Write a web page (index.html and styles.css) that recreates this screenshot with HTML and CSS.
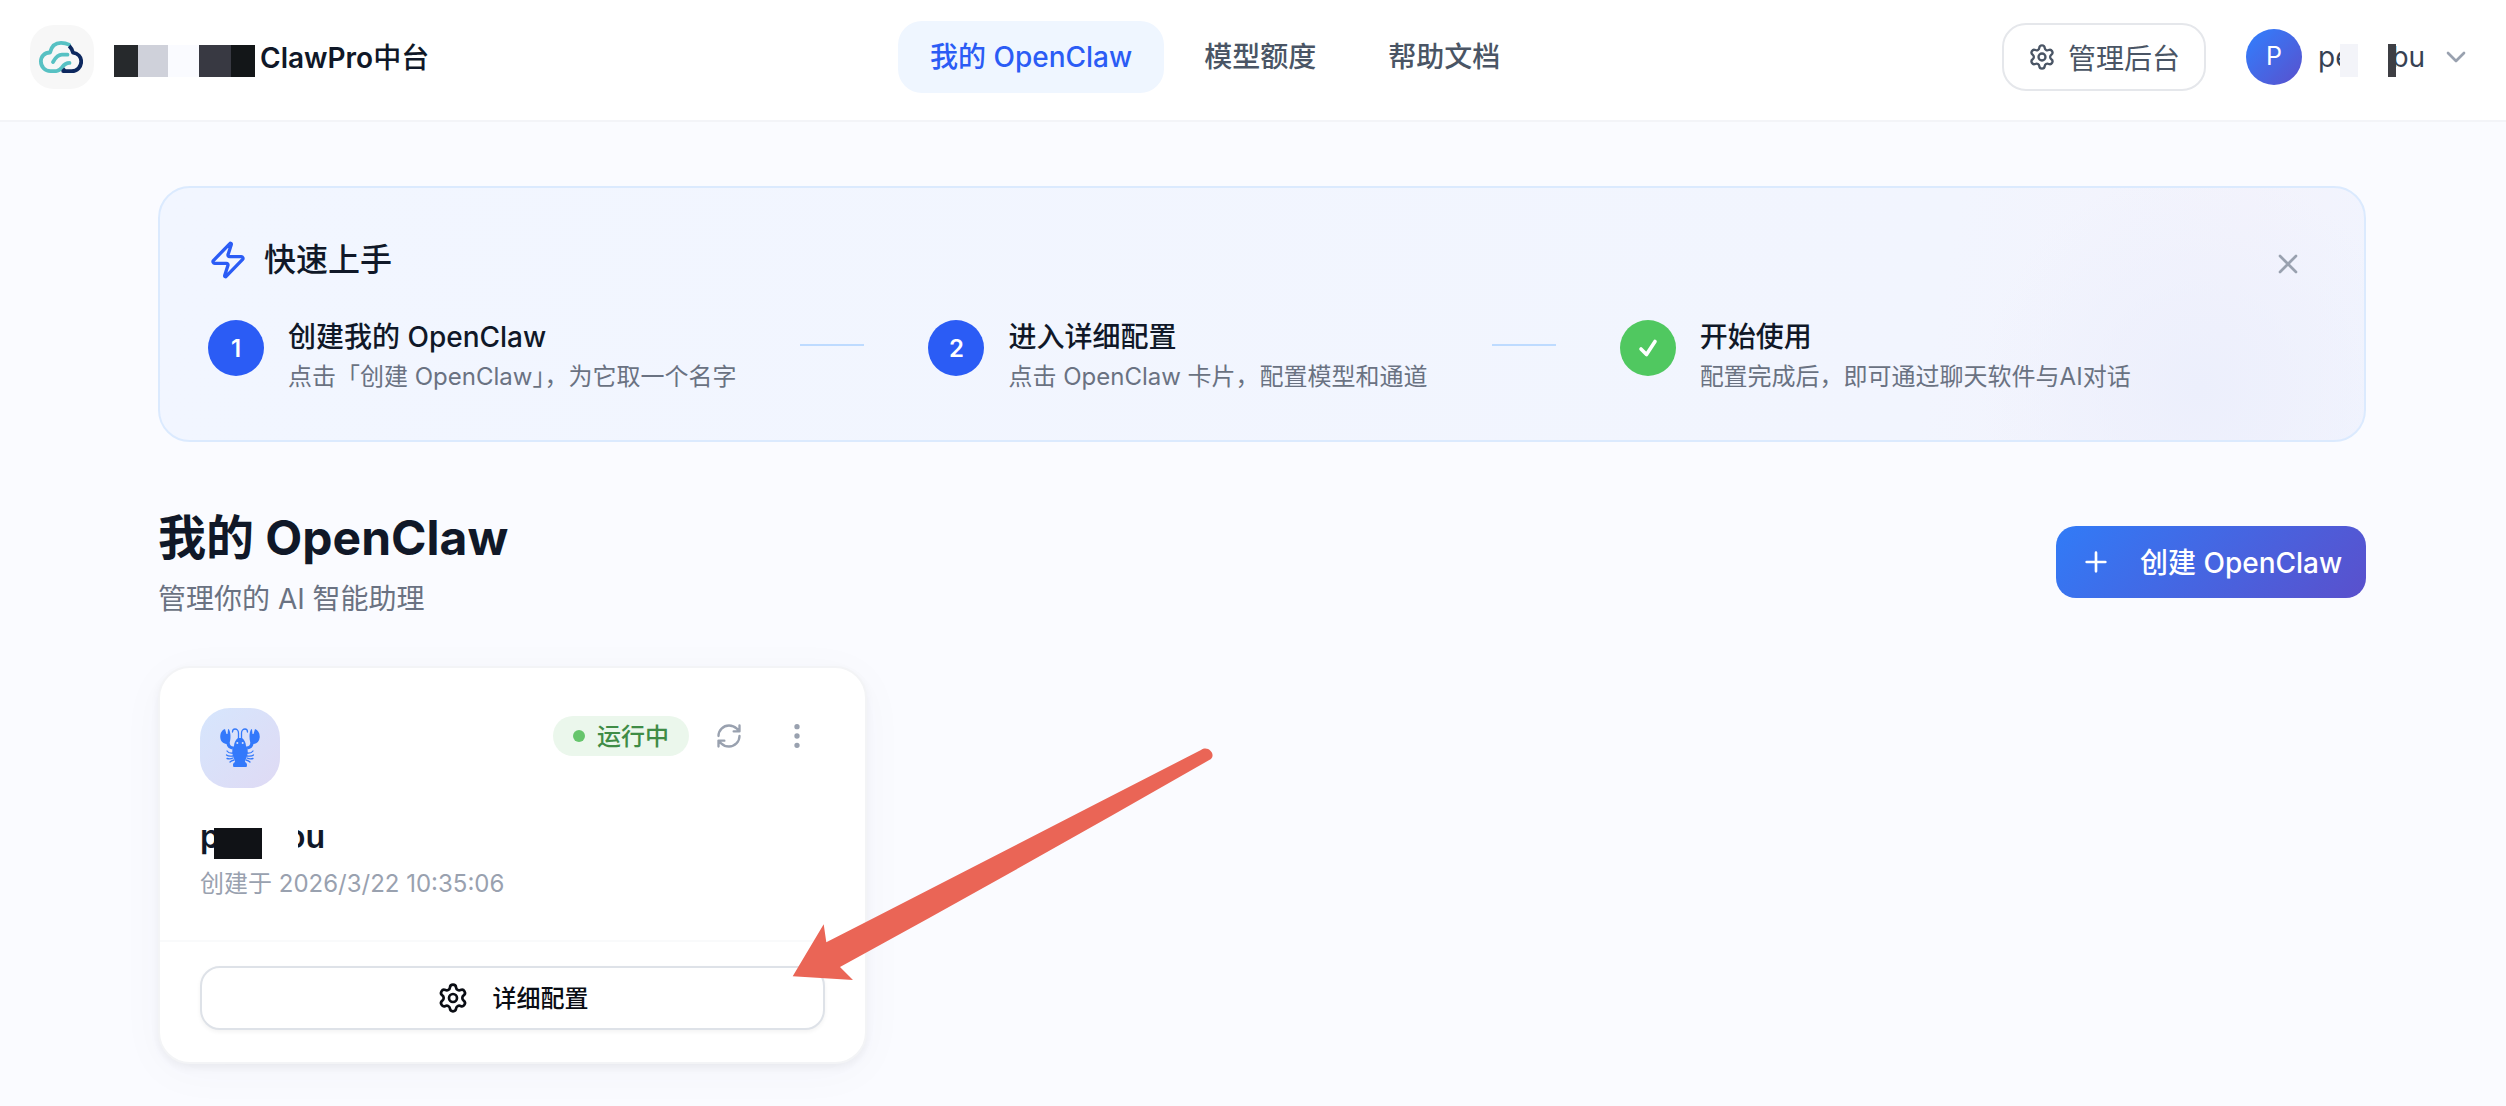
FILE: index.html
```html
<!DOCTYPE html>
<html lang="zh-CN">
<head>
  <meta charset="UTF-8">
  <title>ClawPro中台</title>
  <link rel="stylesheet" href="styles.css">
</head>
<body>
  <svg class="sprite">
    <symbol id="icon-cog" viewBox="0 0 24 24">
      <path d="M9.671 4.136a2.34 2.34 0 0 1 4.659 0 2.34 2.34 0 0 0 3.319 1.915 2.34 2.34 0 0 1 2.33 4.033 2.34 2.34 0 0 0 0 3.831 2.34 2.34 0 0 1-2.33 4.033 2.34 2.34 0 0 0-3.319 1.915 2.34 2.34 0 0 1-4.659 0 2.34 2.34 0 0 0-3.32-1.915 2.34 2.34 0 0 1-2.33-4.033 2.34 2.34 0 0 0 0-3.831A2.34 2.34 0 0 1 6.35 6.051a2.34 2.34 0 0 0 3.319-1.915"/>
      <circle cx="12" cy="12" r="3"/>
    </symbol>
  </svg>

  <header class="header">
    <div class="brand">
      <div class="logo">
        <svg viewBox="0 0 44 32">
          <path class="teal" d="M30 3.600C27.500 2.400 25 1.900 22 1.900c-5.600 0-9.600 3.600-11 9.600C5.500 11.500 1.900 15.500 1.900 20.300c0 5.500 4 9.800 9.500 9.800h5.800c2.600 0 4.300-1.700 6-3.900 2-2.800 3.300-4.300 7.300-4.300"/>
          <path class="teal" d="M14 21c2-3.500 5-7.300 9-7.300h5.500"/>
          <path class="navy" d="M30.200 4.800c2 2 3.300 4.200 3.800 6.800 4.800.8 8.200 4.200 8.200 9 0 5.200-4 9.500-9.500 9.500h-8.500l2.300-2.300"/>
        </svg>
      </div>
      <div class="mosaic">
        <i class="m1"></i><i class="m2"></i><i class="m3"></i><i class="m4"></i><i class="m5"></i>
      </div>
      <span class="brand-name">ClawPro<span class="cn">中台</span></span>
    </div>

    <nav class="nav">
      <a class="nav-link active">我的 OpenClaw</a>
      <a class="nav-link">模型额度</a>
      <a class="nav-link">帮助文档</a>
    </nav>

    <div class="user-area">
      <button class="admin-btn">
        <svg class="icon"><use href="#icon-cog"/></svg>
        管理后台
      </button>
      <div class="user">
        <div class="avatar">P</div>
        <div class="user-name"><span>pe</span><i class="mask"></i><span>bu</span></div>
        <svg class="icon chevron" viewBox="0 0 24 24"><path d="m6 9 6 6 6-6"/></svg>
      </div>
    </div>
  </header>

  <main class="main">
    <section class="guide">
      <div class="guide-head">
        <svg class="icon zap" viewBox="0 0 24 24"><path d="M4 14a1 1 0 0 1-.78-1.630l9.900-10.200a.5.5 0 0 1 .86.460l-1.920 6.020A1 1 0 0 0 13 10h7a1 1 0 0 1 .78 1.630l-9.900 10.200a.5.5 0 0 1-.86-.460l1.920-6.020A1 1 0 0 0 11 14z"/></svg>
        <h2>快速上手</h2>
        <svg class="icon close" viewBox="0 0 24 24"><path d="M18 6 6 18M6 6l12 12"/></svg>
      </div>
      <div class="steps">
        <div class="step">
          <div class="step-num">1</div>
          <div>
            <h3>创建我的 OpenClaw</h3>
            <p>点击「创建 OpenClaw」，为它取一个名字</p>
          </div>
        </div>
        <div class="step-line"></div>
        <div class="step">
          <div class="step-num">2</div>
          <div>
            <h3>进入详细配置</h3>
            <p>点击 OpenClaw 卡片，配置模型和通道</p>
          </div>
        </div>
        <div class="step-line"></div>
        <div class="step">
          <div class="step-num done">
            <svg class="icon" viewBox="0 0 24 24"><path d="M19 5.500 10.500 18.500 5 13"/></svg>
          </div>
          <div>
            <h3>开始使用</h3>
            <p>配置完成后，即可通过聊天软件与AI对话</p>
          </div>
        </div>
      </div>
    </section>

    <section class="page-head">
      <div>
        <h1>我的 OpenClaw</h1>
        <p>管理你的 AI 智能助理</p>
      </div>
      <button class="create-btn">
        <svg class="icon" viewBox="0 0 24 24"><path d="M5 12h14M12 5v14"/></svg>
        <span>创建 OpenClaw</span>
      </button>
    </section>

    <article class="card">
      <div class="card-body">
        <div class="card-top">
          <div class="claw">
            <svg viewBox="0 0 40 40">
              <path d="M5 1C2 2 0 5 .3 9.500.7 13.500 3 15.500 6.500 16c.5 3 2.500 5 6 5.500l1-3c-2.500 0-3.800-1.500-3.800-4 1.200-4 1.200-10-.9-13.500L8 1.500 7.500 6 6.500 6z"/>
              <path d="M35 1c3 1 5 4 4.700 8.500-.4 4-2.700 6-6.200 6.500-.5 3-2.500 5-6 5.500l-1-3c2.500 0 3.800-1.500 3.800-4-1.200-4-1.200-10 .9-13.500l.8.500.5 4.500h1z"/>
              <path d="M18 10h4c2.500 2 3.800 4.500 4 8 2 2 2 6 1.300 9-.8 3-2.300 5-2.300 7 2 1 2.500 3 1.500 5H13.500c-1-2-.5-4 1.500-5 0-2-1.500-4-2.300-7-.7-3-.7-7 1.300-9 .2-3.500 1.500-6 4-8z"/>
              <path class="leg" d="M18.500 11V5c0-3-2-4-3.500-4s-2.500 1-2.500 3M21.500 11V5c0-3 2-4 3.500-4s2.500 1 2.500 3M13 25c-3 .5-5-.5-6-2M13 28c-3 .5-5 .3-6.500-1M13 30c-2 1-4 1-6 .5M14 32c-2 .5-3 1-4 2M27 25c3 .5 5-.5 6-2M27 28c3 .5 5 .3 6.500-1M27 30c2 1 4 1 6 .5M26 32c2 .5 3 1 4 2"/>
              <circle class="eye" cx="17.300" cy="15" r="1"/><circle class="eye" cx="22.700" cy="15" r="1"/>
            </svg>
          </div>
          <div class="card-actions">
            <span class="status"><span>运行中</span></span>
            <svg class="icon refresh" viewBox="0 0 24 24"><path d="M3 12a9 9 0 0 1 9-9 9.750 9.750 0 0 1 6.740 2.740L21 8M21 3v5h-5M21 12a9 9 0 0 1-9 9 9.750 9.750 0 0 1-6.740-2.740L3 16M8 16H3v5"/></svg>
            <svg class="icon more" viewBox="0 0 24 24"><circle cx="12" cy="5" r="1"/><circle cx="12" cy="12" r="1"/><circle cx="12" cy="19" r="1"/></svg>
          </div>
        </div>
        <div class="card-name"><span>p</span><i class="mask"></i><span>ou</span></div>
        <p class="card-date">创建于 2026/3/22 10:35:06</p>
      </div>
      <div class="card-foot">
        <button class="config-btn">
          <svg class="icon"><use href="#icon-cog"/></svg>
          <span>详细配置</span>
        </button>
      </div>
      <svg class="arrow" viewBox="0 0 430 240">
        <path d="M4.700 232.300 35.700 180.300 38.300 198.300Q220 105 413 6C420 1 428 10 423 15Q240 120 52 223L65 236Z"/>
      </svg>
    </article>
  </main>
</body>
</html>
```
FILE: styles.css
```css
* {
  box-sizing: border-box;
}

body {
  margin: 0;
  height: 1106px;
  overflow: hidden;
  background: #fafbff;
  color: #101828;
  font-family: Inter, "Noto Sans CJK SC", sans-serif;
  font-size: 28px;
}

h1, h2, h3, p {
  margin: 0;
}

button {
  font: inherit;
  display: flex;
  align-items: center;
  padding: 0;
}

.icon {
  flex: none;
  fill: none;
  stroke: currentColor;
  stroke-width: 2;
  stroke-linecap: round;
  stroke-linejoin: round;
}

.sprite {
  display: none;
}

/* Header */
.header {
  display: grid;
  grid-template-columns: 898px 1fr auto;
  align-items: center;
  height: 122px;
  padding: 0 34px 6px 0;
  background: #fff;
  border-bottom: 2px solid #f3f4f8;
}

.brand {
  display: flex;
  align-items: center;
  padding-left: 30px;
}

.logo {
  width: 64px;
  height: 64px;
  border-radius: 24px;
  background: #f7f7f7;
  display: flex;
  align-items: center;
  justify-content: center;
}

.logo svg {
  width: 44px;
  height: 32px;
  margin-right: 2px;
  fill: none;
  stroke-width: 3.8;
  stroke-linejoin: round;
}

.teal {
  stroke: #57c1c3;
  stroke-linecap: round;
}

.navy {
  stroke: #0d285f;
}

.mosaic {
  display: flex;
  height: 32px;
  margin: 7px 5px 0 20px;
}

.m1 { width: 24px; background: #26292c; }
.m2 { width: 30px; background: #cfd1da; }
.m3 { width: 31px; background: #fafbff; }
.m4 { width: 32px; background: #383942; }
.m5 { width: 24px; background: #131618; }

.brand-name {
  margin-top: -2px;
  font-weight: 600;
}

.brand-name .cn {
  font-weight: 500;
}

.nav {
  display: flex;
  gap: 8px;
}

.nav-link {
  height: 72px;
  line-height: 72px;
  padding: 0 32px;
  border-radius: 24px;
  font-weight: 500;
  color: #4a5565;
}

.nav-link.active {
  background: #eff6ff;
  color: #2b5cf5;
}

.user-area {
  display: flex;
  align-items: center;
  gap: 40px;
}

.admin-btn {
  width: 204px;
  height: 68px;
  padding: 0 0 1px 24px;
  gap: 12px;
  border: 2px solid #e5e7eb;
  border-radius: 24px;
  background: #fff;
  color: #4a5565;
}

.admin-btn .icon {
  width: 28px;
  height: 28px;
}

.user {
  display: flex;
  align-items: center;
  color: #364153;
}

.avatar {
  width: 56px;
  height: 56px;
  border-radius: 50%;
  background: linear-gradient(135deg, #3080ff, #5a50cc);
  color: #fff;
  font-size: 25px;
  line-height: 55px;
  text-align: center;
}

.user-name {
  display: flex;
  align-items: center;
  width: 109px;
  margin-left: 16px;
}

.user-name .mask {
  position: relative;
  flex: none;
  width: 56px;
  height: 33px;
  margin: 7px -5px 0 -11px;
  background: linear-gradient(90deg, #f3f4f9 18px, #fff 18px, #fff 48px, #3e3f44 48px);
}

.chevron {
  width: 32px;
  height: 32px;
  margin-left: 13px;
  color: #99a1af;
}

/* Quick start */
.main {
  width: 2208px;
  margin: 64px 0 0 158px;
}

.guide {
  height: 256px;
  padding: 48px;
  border: 2px solid #dbeafe;
  border-radius: 32px;
  background:
    radial-gradient(circle 220px at 2040px 200px, #eceffc, rgba(241, 243, 253, 0)),
    linear-gradient(100deg, #f2f6ff, #f2f5fe 80%, #f3f3fc 93%, #f1f4fe);
}

.guide-head {
  display: flex;
  align-items: center;
  height: 48px;
}

.guide-head h2 {
  flex: 1;
  font-size: 32px;
  font-weight: 500;
  line-height: 48px;
}

.zap {
  width: 40px;
  height: 40px;
  margin-right: 16px;
  color: #2b5cf5;
}

.close {
  width: 32px;
  height: 32px;
  margin: 8px 12px 0 0;
  color: #99a1af;
}

.steps {
  display: flex;
  align-items: flex-start;
  gap: 64px;
  margin-top: 28px;
}

.step {
  display: flex;
  gap: 24px;
}

.step-num {
  display: flex;
  align-items: center;
  justify-content: center;
  width: 56px;
  height: 56px;
  margin-top: 8px;
  border-radius: 50%;
  background: #2b5cf5;
  color: #fff;
  font-size: 24px;
  font-weight: 600;
}

.step-num.done {
  background: #50c860;
}

.step-num .icon {
  width: 24px;
  height: 24px;
  stroke-width: 3.6;
}

.step h3 {
  padding-top: 1px;
  font-size: 28px;
  font-weight: 500;
  line-height: 48px;
}

.step p {
  color: #6a7282;
  font-size: 24px;
  line-height: 31px;
}

.step-line {
  width: 64px;
  height: 2px;
  margin-top: 32px;
  background: #bedbff;
}

/* Page title */
.page-head {
  display: flex;
  justify-content: space-between;
  align-items: center;
  height: 112px;
  margin-top: 64px;
}

.page-head h1 {
  font-size: 48px;
  font-weight: 700;
  line-height: 64px;
}

.page-head p {
  margin: 9px 0 -1px;
  color: #6a7282;
  line-height: 40px;
}

.create-btn {
  width: 310px;
  height: 72px;
  padding-left: 24px;
  gap: 28px;
  border: 0;
  border-radius: 20px;
  background: linear-gradient(135deg, #317bf7, #5a50cc);
  color: #fff;
  font-weight: 500;
}

.create-btn span {
  margin-bottom: 2px;
}

.create-btn .icon {
  width: 32px;
  height: 32px;
}

/* Instance card */
.card {
  position: relative;
  width: 709px;
  height: 398px;
  margin-top: 48px;
  border: 2px solid #f3f4f6;
  border-radius: 32px;
  background: #fff;
  box-shadow: 0 4px 8px rgba(0, 0, 0, 0.05), 0 8px 48px rgba(30, 40, 90, 0.03);
}

.card-body {
  height: 272px;
  padding: 40px;
}

.card-top {
  display: flex;
  justify-content: space-between;
}

.claw {
  display: flex;
  align-items: center;
  justify-content: center;
  width: 80px;
  height: 80px;
  border-radius: 30px;
  background: linear-gradient(135deg, #d6e6fd, #dfdaf4);
}

.claw svg {
  width: 40px;
  height: 40px;
  fill: #3379fb;
}

.claw .leg {
  fill: none;
  stroke: #3379fb;
  stroke-width: 1.3;
  stroke-linecap: round;
}

.claw .eye {
  fill: #d9e2fb;
}

.card-actions {
  display: flex;
  align-items: center;
  height: 56px;
  color: #99a1af;
}

.status {
  display: flex;
  align-items: center;
  gap: 12px;
  width: 136px;
  height: 40px;
  padding-left: 20px;
  border-radius: 20px;
  background: #ebf7ec;
  color: #3f8c46;
  font-size: 24px;
  font-weight: 500;
}

.status span {
  margin-bottom: 3px;
}

.status::before {
  content: "";
  width: 12px;
  height: 12px;
  border-radius: 50%;
  background: #66c56c;
}

.refresh {
  width: 28px;
  height: 28px;
  margin-left: 26px;
}

.more {
  width: 32px;
  height: 32px;
  margin: 0 12px 0 38px;
}

.card-name {
  display: flex;
  align-items: center;
  height: 40px;
  margin-top: 28px;
  font-size: 32px;
  font-weight: 600;
}

.card-name .mask {
  position: relative;
  flex: none;
  width: 84px;
  height: 31px;
  margin: 15px -12px 0 -6px;
  background: linear-gradient(90deg, #101216 48px, #fff 48px);
}

.card-date {
  margin-top: 10px;
  color: #99a1af;
  font-size: 24px;
  line-height: 36px;
}

.card-foot {
  padding: 24px 40px;
  border-top: 2px solid #f9fafb;
}

.config-btn {
  width: 625px;
  height: 64px;
  justify-content: center;
  gap: 24px;
  border: 2px solid #dee2e8;
  border-radius: 20px;
  background: #fff;
  box-shadow: 0 2px 4px rgba(0, 0, 0, 0.05);
  color: #0a0d14;
  font-size: 24px;
  font-weight: 500;
}

.config-btn span {
  margin-bottom: 3px;
}

.config-btn .icon {
  width: 32px;
  height: 32px;
}

/* Pointer over the config button */
.arrow {
  position: absolute;
  left: 628px;
  top: 76px;
  width: 430px;
  height: 240px;
  fill: #ea6556;
}
```
